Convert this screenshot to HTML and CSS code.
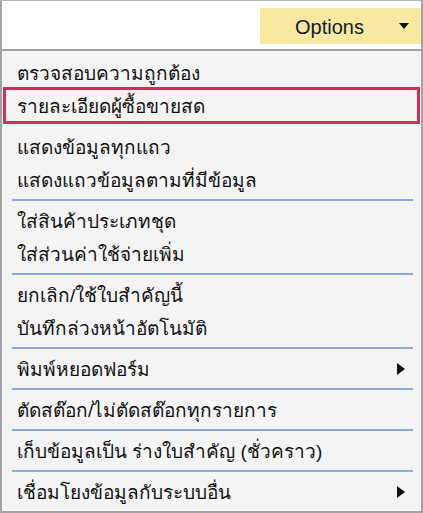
FILE: index.html
```html
<!DOCTYPE html>
<html lang="th">
<head>
  <meta charset="UTF-8">
  <meta name="viewport" content="width=device-width, initial-scale=1.0">
  <title>Options</title>
  <link rel="stylesheet" href="styles.css">
</head>
<body>
  <div class="panel">
    <div class="toolbar">
      <button class="options-btn">
        <span>Options</span>
        <span class="caret"></span>
      </button>
    </div>

    <div class="menu">
      <div class="menu-item">ตรวจสอบความถูกต้อง</div>
      <div class="menu-item marked">รายละเอียดผู้ซื้อขายสด</div>

      <div class="menu-item">แสดงข้อมูลทุกแถว</div>
      <div class="menu-item">แสดงแถวข้อมูลตามที่มีข้อมูล</div>
      <div class="separator"></div>

      <div class="menu-item">ใส่สินค้าประเภทชุด</div>
      <div class="menu-item">ใส่ส่วนค่าใช้จ่ายเพิ่ม</div>
      <div class="separator"></div>

      <div class="menu-item">ยกเลิก/ใช้ใบสำคัญนี้</div>
      <div class="menu-item">บันทึกล่วงหน้าอัตโนมัติ</div>
      <div class="separator"></div>

      <div class="menu-item has-sub">พิมพ์หยอดฟอร์ม<span class="sub-arrow"></span></div>
      <div class="separator"></div>

      <div class="menu-item">ตัดสต๊อก/ไม่ตัดสต๊อกทุกรายการ</div>
      <div class="separator"></div>

      <div class="menu-item">เก็บข้อมูลเป็น ร่างใบสำคัญ (ชั่วคราว)</div>
      <div class="separator"></div>

      <div class="menu-item has-sub">เชื่อมโยงข้อมูลกับระบบอื่น<span class="sub-arrow"></span></div>
    </div>
  </div>
</body>
</html>
```

FILE: styles.css
```css
body {
  margin: 0;
  background-color: #ffffff;
  font-family: Tahoma, "Liberation Sans", sans-serif;
  color: #111111;
}

.panel {
  width: 423px;
  height: 513px;
  box-sizing: border-box;
  border-top: 1px solid #b4b4b4;
  border-left: 2px solid #a3a3a3;
  border-right: 2px solid #a3a3a3;
  display: flex;
  flex-direction: column;
}

.toolbar {
  height: 48px;
  box-sizing: border-box;
  padding: 7px 0 0;
  display: flex;
  justify-content: flex-end;
}

.options-btn {
  width: 161px;
  height: 36px;
  border: none;
  background-color: #f8e9a1;
  display: flex;
  align-items: center;
  padding: 2px 12px 0 35px;
  font-family: "Liberation Sans", Arial, sans-serif;
  font-size: 20px;
  color: #141830;
  cursor: pointer;
}

.caret {
  margin-left: auto;
  margin-top: -3px;
  width: 0;
  height: 0;
  border-left: 5px solid transparent;
  border-right: 5px solid transparent;
  border-top: 6px solid #111111;
}

.menu {
  flex: 1;
  background-color: #f4f4f4;
  border-top: 2px solid #a3a3a3;
  border-bottom: 2px solid #a3a3a3;
  padding-top: 5px;
}

.menu-item {
  height: 33px;
  margin: 0 3px;
  padding: 0 12px;
  display: flex;
  align-items: center;
  font-size: 19px;
  font-weight: 500;
  white-space: nowrap;
}

.menu-item.marked {
  outline: 3px solid #d62b5b;
  outline-offset: -1px;
  margin-bottom: 8px;
}

.sub-arrow {
  margin-left: auto;
  margin-right: 1px;
  width: 0;
  height: 0;
  border-top: 6px solid transparent;
  border-bottom: 6px solid transparent;
  border-left: 8px solid #111111;
}

.separator {
  height: 2px;
  margin: 3px 8px 3px 10px;
  background-color: #8caadd;
}
```
